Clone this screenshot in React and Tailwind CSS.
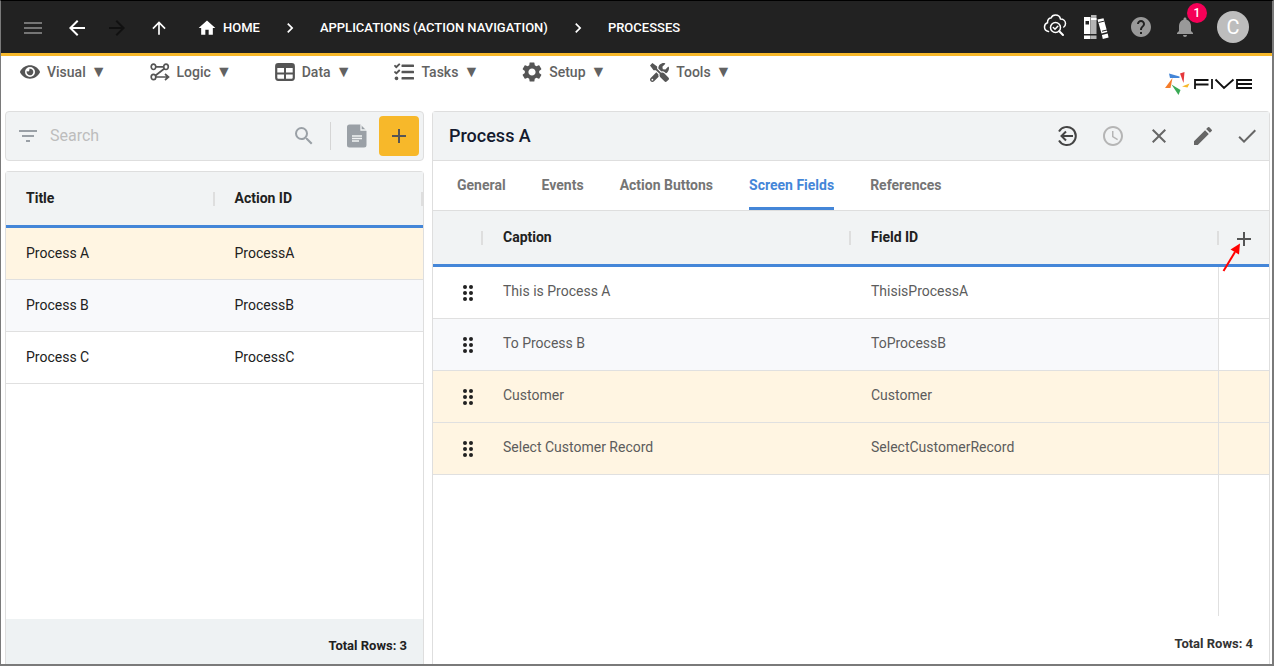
import React, { useState } from "react";
import {
  MdMenu,
  MdArrowBack,
  MdArrowForward,
  MdArrowUpward,
  MdHome,
  MdChevronRight,
  MdHelp,
  MdNotifications,
  MdFilterList,
  MdSearch,
  MdSettings,
  MdClose,
  MdEdit,
  MdCheck,
  MdAdd,
  MdAccessTime,
} from "react-icons/md";
import { FaEye, FaTasks, FaTools } from "react-icons/fa";

const processes = [
  { title: "Process A", actionId: "ProcessA" },
  { title: "Process B", actionId: "ProcessB" },
  { title: "Process C", actionId: "ProcessC" },
];

const screenFields = [
  { caption: "This is Process A", fieldId: "ThisisProcessA", added: false },
  { caption: "To Process B", fieldId: "ToProcessB", added: false },
  { caption: "Customer", fieldId: "Customer", added: true },
  {
    caption: "Select Customer Record",
    fieldId: "SelectCustomerRecord",
    added: true,
  },
];

const tabs = [
  "General",
  "Events",
  "Action Buttons",
  "Screen Fields",
  "References",
];

const menus = [
  { label: "Visual", icon: <FaEye size={20} /> },
  { label: "Logic", icon: <LogicIcon /> },
  { label: "Data", icon: <DataIcon /> },
  { label: "Tasks", icon: <FaTasks size={20} /> },
  { label: "Setup", icon: <MdSettings size={24} /> },
  { label: "Tools", icon: <FaTools size={19} /> },
];

export default function App() {
  return (
    <div className="h-screen flex flex-col overflow-hidden bg-white border-l border-t border-r-2 border-b-2 border-[#7a7a7a] border-t-black font-[Roboto,sans-serif] text-sm text-[#212121]">
      <TopBar />
      <MenuBar />
      <main className="flex-1 min-h-0 grid grid-cols-[1fr_2fr] gap-2 pl-1 pr-0.5">
        <ProcessList />
        <ProcessForm />
      </main>
    </div>
  );
}

function TopBar() {
  return (
    <header className="h-[55px] shrink-0 flex items-center justify-between bg-[#222222] border-b-3 border-[#f7b82a] text-white pl-5 pr-[23px]">
      <nav className="flex items-center pt-0.5 text-[13px] font-medium">
        <button aria-label="Menu" className="text-[#757575]">
          <MdMenu size={24} />
        </button>
        <button aria-label="Back" className="ml-5">
          <MdArrowBack size={24} />
        </button>
        <button aria-label="Forward" className="ml-4 text-[#111111]">
          <MdArrowForward size={24} />
        </button>
        <button aria-label="Up" className="ml-5">
          <MdArrowUpward size={20} />
        </button>
        <a href="#home" className="ml-7 flex items-center gap-1.5">
          <MdHome size={20} />
          HOME
        </a>
        <MdChevronRight size={20} className="mx-5" />
        <a href="#applications">APPLICATIONS (ACTION NAVIGATION)</a>
        <MdChevronRight size={20} className="mx-5" />
        <a href="#processes">PROCESSES</a>
      </nav>
      <div className="flex items-center">
        <button aria-label="Inspect">
          <CloudSearchIcon />
        </button>
        <button aria-label="Documentation" className="ml-4">
          <BooksIcon />
        </button>
        <button aria-label="Help" className="ml-5 text-[#999999]">
          <MdHelp size={24} />
        </button>
        <button
          aria-label="Notifications"
          className="ml-5 relative text-[#999999]"
        >
          <MdNotifications size={24} />
          <span className="absolute -top-3 -right-2.5 size-5 rounded-full bg-[#f50057] text-white text-xs font-medium flex items-center justify-center">
            1
          </span>
        </button>
        <button className="ml-5 size-8 rounded-full bg-[#bdbdbd] text-xl flex items-center justify-center">
          C
        </button>
      </div>
    </header>
  );
}

function MenuBar() {
  return (
    <div className="h-[55px] shrink-0 flex items-start justify-between pl-[17px] pr-5">
      <nav className="flex gap-[41px] pt-1">
        {menus.map((menu) => (
          <button
            key={menu.label}
            className="h-6 flex items-center gap-[5px] font-medium text-[#626262]"
          >
            <span className="w-6 flex justify-center text-[#555555]">
              {menu.icon}
            </span>
            {menu.label}
            <span className="text-base leading-6">▼</span>
          </button>
        ))}
      </nav>
      <FiveLogo />
    </div>
  );
}

function ProcessList() {
  const [selected, setSelected] = useState("Process A");
  return (
    <section className="min-h-0 flex flex-col gap-2.5">
      <div className="h-[50px] shrink-0 flex items-center rounded-sm border border-[#dedede] bg-[#f1f3f4] pl-2.5 pr-1 text-[#9aa0a6]">
        <MdFilterList size={24} />
        <input
          aria-label="Search"
          placeholder="Search"
          className="flex-1 min-w-0 ml-2.5 text-base text-[#212121] placeholder:text-[#bdbdbd] outline-none"
        />
        <button aria-label="Run search">
          <MdSearch size={24} />
        </button>
        <span className="ml-3.5 h-7 border-l border-[#d5d5d5]"></span>
        <button aria-label="Report" className="ml-4 mr-3">
          <ReportIcon />
        </button>
        <button
          aria-label="Add process"
          className="size-10 rounded bg-[#f7b82a] text-[#555555] flex items-center justify-center"
        >
          <MdAdd size={24} />
        </button>
      </div>
      <div className="flex-1 min-h-0 flex flex-col rounded-t-sm border border-b-0 border-[#dedede]">
        <table className="w-full table-fixed border-separate border-spacing-0 text-left">
          <thead>
            <tr className="h-14 bg-[#f1f3f4]">
              <HeadCell>Title</HeadCell>
              <HeadCell>Action ID</HeadCell>
            </tr>
          </thead>
          <tbody>
            {processes.map((item) => (
              <tr
                key={item.title}
                onClick={() => setSelected(item.title)}
                className={
                  "h-13 cursor-pointer" +
                  (selected === item.title
                    ? " bg-[#fff5e2]"
                    : " even:bg-[#f8f9fb]")
                }
              >
                <td className="px-5 pt-0 pb-0.5 border-b border-[#e0e0e0]">
                  {item.title}
                </td>
                <td className="px-5 pt-0 pb-0.5 border-b border-[#e0e0e0]">
                  {item.actionId}
                </td>
              </tr>
            ))}
          </tbody>
        </table>
        <div className="mt-auto h-[45px] pt-2.5 pr-4 flex items-center justify-end bg-[#eef2f3] text-[13px] font-bold">
          Total Rows: {processes.length}
        </div>
      </div>
    </section>
  );
}

function HeadCell({ children }) {
  return (
    <th className="p-0 font-bold border-b-3 border-[#4486d8]">
      <div className="flex items-center justify-between pl-5">
        <span className="pb-0.5">{children}</span>
        <span className="h-3.5 border-r-2 border-[#dedede]"></span>
      </div>
    </th>
  );
}

function ProcessForm() {
  const [tab, setTab] = useState("Screen Fields");
  return (
    <section className="min-h-0 flex flex-col rounded-t-sm border border-b-0 border-[#dedede]">
      <div className="h-[49px] shrink-0 flex items-center justify-between pl-4 pr-2.5 bg-[#f1f3f4] border-b border-[#dedede]">
        <h1 className="text-lg font-medium text-[#141a2e]">Process A</h1>
        <div className="flex items-center gap-5 text-[#666666]">
          <div className="flex items-center gap-[22px]">
            <button aria-label="Return" className="text-[#444444]">
              <ReturnIcon />
            </button>
            <button aria-label="History" className="text-[#b5b5b5]">
              <MdAccessTime size={24} />
            </button>
            <button aria-label="Close">
              <MdClose size={24} />
            </button>
          </div>
          <button aria-label="Edit">
            <MdEdit size={24} />
          </button>
          <button aria-label="Save">
            <MdCheck size={24} />
          </button>
        </div>
      </div>
      <div className="h-[50px] shrink-0 flex gap-9 px-6 border-b border-[#dedede]">
        {tabs.map((name) => (
          <button
            key={name}
            onClick={() => setTab(name)}
            className={
              "font-bold border-b-3 pt-px" +
              (tab === name
                ? " text-[#4486d8] border-b-[#4486d8]"
                : " text-[#757575] border-b-transparent")
            }
          >
            {name}
          </button>
        ))}
      </div>
      <div className="relative">
        <table className="w-full table-fixed border-separate border-spacing-0 text-left">
          <colgroup>
            <col className="w-[50px]" />
            <col />
            <col />
            <col className="w-[50px]" />
          </colgroup>
          <thead>
            <tr className="h-14 bg-[#f1f3f4]">
              <HeadCell></HeadCell>
              <HeadCell>Caption</HeadCell>
              <HeadCell>Field ID</HeadCell>
              <th className="p-0 border-b-3 border-[#4486d8]">
                <button
                  aria-label="Add field"
                  className="w-full flex justify-center pt-0.5 text-[#555555]"
                >
                  <MdAdd size={24} />
                </button>
              </th>
            </tr>
          </thead>
          <tbody className="text-[#5c5c5c]">
            {screenFields.map((field, index) => (
              <FieldRow key={field.fieldId} field={field} index={index} />
            ))}
          </tbody>
        </table>
        <svg
          className="absolute top-8 right-7 text-[#ff0000]"
          width="20"
          height="30"
          viewBox="0 0 20 30"
          fill="currentColor"
        >
          <path d="M2.500 28 14 9" stroke="currentColor" strokeWidth="2" />
          <path d="M19 0.500 18 11.500 9.500 6.500z" />
        </svg>
      </div>
      <div className="flex-1 flex justify-end">
        <div className="w-[51px] border-l border-[#e0e0e0]"></div>
      </div>
      <div className="h-12 pt-2 pr-4 flex items-center justify-end text-[13px] font-bold text-[#333333]">
        Total Rows: {screenFields.length}
      </div>
    </section>
  );
}

function FieldRow({ field, index }) {
  const rowColor = field.added
    ? "bg-[#fff5e2]"
    : index % 2 === 1
    ? "bg-[#f8f9fb]"
    : "bg-white";
  const cell = "border-b border-[#e0e0e0] " + rowColor;
  return (
    <tr className="h-13">
      <td className={cell + " pl-5 text-[#212121]"}>
        <DragIcon />
      </td>
      <td className={cell + " px-5 pb-1"}>{field.caption}</td>
      <td className={cell + " px-5 pb-1 border-r"}>{field.fieldId}</td>
      <td
        className={
          "border-b border-[#e0e0e0]" + (field.added ? " bg-[#fff5e2]" : "")
        }
      ></td>
    </tr>
  );
}

function DragIcon() {
  return (
    <svg width="30" height="18" viewBox="0 0 30 18" fill="currentColor">
      {[3, 9, 15].map((y) => (
        <g key={y}>
          <circle cx="12" cy={y} r="2" />
          <circle cx="18" cy={y} r="2" />
        </g>
      ))}
    </svg>
  );
}

function LogicIcon() {
  return (
    <svg
      width="20"
      height="18"
      viewBox="0 0 20 18"
      fill="none"
      stroke="currentColor"
      strokeWidth="1.700"
    >
      <ellipse cx="3.500" cy="3.800" rx="2.300" ry="2.700" />
      <ellipse cx="16" cy="3.800" rx="2.300" ry="2.700" />
      <ellipse cx="3.500" cy="14" rx="2.300" ry="2.700" />
      <path d="M6 3.800h7.500M14.500 5.500 5.500 12.500M6 14h12M15 11l3.500 3-3.500 3" />
    </svg>
  );
}

function DataIcon() {
  return (
    <svg width="20" height="18" viewBox="0 0 20 18" fill="none">
      <rect
        x="1.200"
        y="1.200"
        width="17.600"
        height="15.600"
        rx="2"
        stroke="currentColor"
        strokeWidth="2.200"
      />
      <path d="M1 3h18" stroke="currentColor" strokeWidth="4" />
      <path d="M1 10.500h18M10 4v13" stroke="currentColor" strokeWidth="2" />
    </svg>
  );
}

function CloudSearchIcon() {
  return (
    <svg
      width="24"
      height="26"
      viewBox="0 1 24 26"
      fill="none"
      stroke="currentColor"
      strokeWidth="1.5"
      strokeLinecap="round"
    >
      <path d="M5.500 18.500C3 18 1.500 16.300 1.500 14c0-2 1.200-3.600 3-4.200C4.400 6.500 6 5 8 5c.8-2 2.400-3 4.500-3 2.600 0 4.500 1.600 5 4 2.800 0 5 1.800 5 4.500 0 1.500-.6 2.700-1.700 3.500" />
      <circle cx="12.500" cy="14.500" r="5" />
      <path d="M16.300 18.200 20 22" strokeWidth="2" />
      <path d="m10.300 14.500 1.700 1.700 2.800-3" />
    </svg>
  );
}

function BooksIcon() {
  return (
    <svg width="26" height="26" viewBox="0 0 26 26" fill="currentColor">
      <path d="M1 3h6.500v17H1zM1 21.500h6.500V25H1z" />
      <path d="M8 1h5.500v19H8zM8 21.500h5.500V25H8z" fill="#b5b5b5" />
      <path d="M8 4h5.500v2H8z" />
      <path d="m14.500 5.500 6-1.300L24.300 18l-5.800 1.500zM18.900 20.900l5.800-1.500.9 4-5.800 1.500z" />
      <path d="M2.500 7h3.500v3.500H2.500z" fill="#222222" />
      <path
        d="m15.500 8.500 5.800-1.400M19 17.200l5-1.200"
        fill="none"
        stroke="#222222"
      />
    </svg>
  );
}

function ReportIcon() {
  return (
    <svg width="20" height="24" viewBox="0 0 20 24" fill="currentColor">
      <path d="M2.500 0.500H13.500L19.500 6.500V21a2.500 2.500 0 0 1-2.500 2.500H2.500A2.500 2.500 0 0 1 0 21V3A2.500 2.500 0 0 1 2.500.5z" />
      <path
        d="M14 0.500V6h6M5 12h10M5 14.500h10M5 17h7"
        fill="none"
        stroke="#f1f3f4"
        strokeWidth="1.300"
      />
    </svg>
  );
}

function ReturnIcon() {
  return (
    <svg
      width="24"
      height="24"
      viewBox="0 0 24 24"
      fill="none"
      stroke="currentColor"
      strokeWidth="2"
    >
      <path d="M4 7.500A9 9 0 1 1 4 16.500" />
      <path d="M18 12H6.500M11 7.500 6.500 12l4.500 4.500" />
    </svg>
  );
}

function FiveLogo() {
  return (
    <svg
      role="img"
      aria-label="Five"
      className="mt-3.5"
      width="87"
      height="28"
      viewBox="0 0 87 28"
    >
      <path d="M4 3.500 14.500 6.500V8H5z" fill="#4486d8" />
      <path d="M15 3.500 19.500 2 18.500 13z" fill="#e5383b" />
      <path d="M17 16.500 24.500 13.500 22.500 17.500z" fill="#f7b82a" />
      <path d="M6.500 14.500 15.500 20 13.500 25z" fill="#3aaa55" />
      <path d="M7.500 8 5.500 18H0z" fill="#f57c2a" />
      <g fill="none" stroke="#111111" strokeWidth="1.800">
        <path d="M30 19V10h13.500M30 14.500h13.500M47 9v10M50.500 9.500 59 18 68.500 9.500M87 10H72v8h15M72 14h15" />
      </g>
    </svg>
  );
}
